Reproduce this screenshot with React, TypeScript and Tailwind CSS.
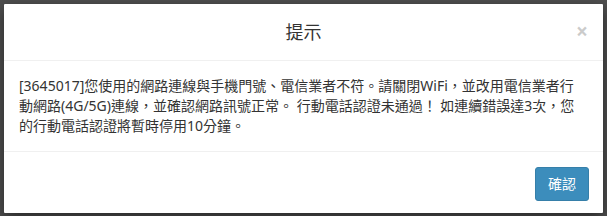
const App = () => {
  return (
    <div className="w-[607px] h-[216px] overflow-hidden bg-[#4f4f4f] pt-1 px-1 font-['Noto_Sans','Noto_Sans_CJK_TC',sans-serif] text-[#333]">
      <div className="bg-white rounded-[1px] shadow-[0_5px_15px_rgba(0,0,0,0.5)]">
        <div className="grid grid-cols-[1fr_auto_1fr] items-center border-b border-[#f0f0f0] p-[15px]">
          <div />
          <h4 className="text-[18px] leading-[26px]">提示</h4>
          <div className="flex justify-end">
            <button
              type="button"
              className="text-[21px] font-bold leading-none text-black opacity-20 -mt-[2px]"
            >
              ×
            </button>
          </div>
        </div>
        <div className="py-[15px] pl-[15px] pr-[20px] text-[14px] leading-[20px]">
          [3645017]您使用的網路連線與手機門號、電信業者不符。請關閉WiFi，並改用電信業者行動網路(4G/5G)連線，並確認網路訊號正常。 行動電話認證未通過！ 如連續錯誤達3次，您的行動電話認證將暫時停用10分鐘。
        </div>
        <div className="flex justify-end border-t border-[#f0f0f0] px-[14px] pt-[15px] pb-[12px]">
          <button
            type="button"
            className="bg-[#3c8dbc] border border-[#367fa9] rounded-[3px] px-[12px] py-[6px] text-[14px] leading-[20px] text-white"
          >
            確認
          </button>
        </div>
      </div>
    </div>
  );
};

export default App;
